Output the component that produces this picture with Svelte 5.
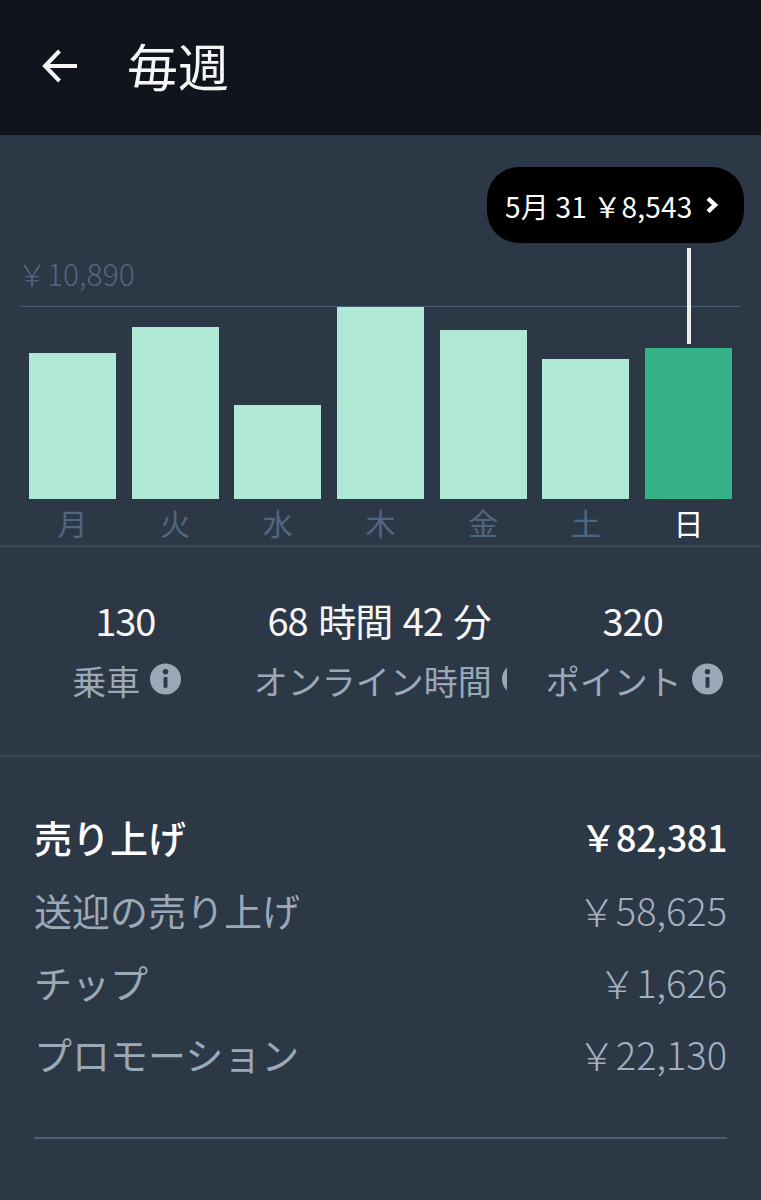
<script>
  const days = [
    { label: "月", height: 146 },
    { label: "火", height: 172 },
    { label: "水", height: 94 },
    { label: "木", height: 192 },
    { label: "金", height: 169 },
    { label: "土", height: 140 },
    { label: "日", height: 151, active: true }
  ];

  const stats = [
    { value: "130", label: "乗車" },
    { value: "68 時間 42 分", label: "オンライン時間" },
    { value: "320", label: "ポイント" }
  ];

  const rows = [
    { label: "送迎の売り上げ", amount: "￥58,625" },
    { label: "チップ", amount: "￥1,626" },
    { label: "プロモーション", amount: "￥22,130" }
  ];
</script>

<div class="page">
  <header class="top">
    <svg class="back" viewBox="0 0 36 34" width="36" height="34" aria-hidden="true">
      <path d="M35 17H3.5M17.5 2 3 17 17.5 32" fill="none" stroke="#f6f6f6" stroke-width="4" />
    </svg>
    <h1>毎週</h1>
  </header>

  <section class="chart">
    <div class="tooltip">
      <span>5月 31 ￥8,543</span>
      <svg viewBox="0 0 12 16" width="12" height="16" aria-hidden="true">
        <path d="M2 1.5 9 8 2 14.5" fill="none" stroke="#fff" stroke-width="4.4" />
      </svg>
    </div>
    <div class="marker"></div>

    <div class="max">￥10,890</div>
    <div class="plot">
      {#each days as day}
        <div class="bar-col">
          <div class="bar" class:active={day.active} style="height: {day.height}px"></div>
        </div>
      {/each}
    </div>
    <div class="axis">
      {#each days as day}
        <span class:active={day.active}>{day.label}</span>
      {/each}
    </div>
  </section>

  <section class="stats">
    {#each stats as stat}
      <div class="stat">
        <div class="value">{stat.value}</div>
        <div class="label">
          <span>{stat.label}</span>
          <svg class="info" viewBox="0 0 32 32" width="31" height="32" aria-hidden="true">
            <circle cx="16" cy="16" r="16" fill="#9aa8b7" />
            <circle cx="16" cy="8.5" r="2.8" fill="#2d3847" />
            <rect x="14" y="14" width="4" height="11" fill="#2d3847" />
          </svg>
        </div>
      </div>
    {/each}
  </section>

  <section class="earnings">
    <div class="row total">
      <span class="name">売り上げ</span>
      <span class="amount">￥82,381</span>
    </div>
    {#each rows as row}
      <div class="row">
        <span class="name">{row.label}</span>
        <span class="amount">{row.amount}</span>
      </div>
    {/each}
    <div class="rule"></div>
  </section>
</div>

<style>
  :global(body) {
    background: #2d3847;
  }
  .page {
    width: 761px;
    height: 1200px;
    overflow: hidden;
    background: #2d3847;
    font-family: "Noto Sans CJK JP", "Noto Sans", sans-serif;
    font-weight: 300;
    color: #f6f6f6;
  }
  .top {
    height: 135px;
    background: #10141c;
    display: flex;
    align-items: center;
    padding-left: 42px;
    box-sizing: border-box;
  }
  .back {
    margin-top: -3px;
  }
  h1 {
    margin: -6px 0 0 49px;
    font-size: 51px;
    line-height: 60px;
    font-weight: 400;
  }
  .chart {
    position: relative;
    height: 412px;
    box-sizing: border-box;
    padding-top: 120px;
    border-bottom: 2px solid #3a4759;
  }
  .tooltip {
    position: absolute;
    top: 32px;
    left: 487px;
    width: 257px;
    height: 76px;
    border-radius: 32px;
    background: #000;
    color: #fff;
    display: flex;
    align-items: center;
    gap: 13px;
    padding-left: 18px;
    box-sizing: border-box;
    font-size: 28px;
    letter-spacing: 0.2px;
    font-weight: 400;
  }
  .tooltip span {
    margin-top: 2px;
  }
  .marker {
    position: absolute;
    top: 113px;
    left: 687px;
    width: 4px;
    height: 96px;
    background: #ececec;
  }
  .max {
    margin-left: 17px;
    height: 51px;
    line-height: 36px;
    font-size: 30px;
    color: #4f6780;
  }
  .plot {
    margin: 0 21px;
    height: 192px;
    padding: 0 8px;
    border-top: 1px solid #4a6079;
    display: grid;
    grid-template-columns: repeat(7, 87px);
    justify-content: space-between;
    align-items: end;
  }
  .bar-col {
    display: flex;
    align-items: flex-end;
    height: 192px;
  }
  .bar {
    width: 100%;
    background: #b0e8d6;
  }
  .bar.active {
    background: #36b289;
  }
  .axis {
    margin: 0 29px;
    display: grid;
    grid-template-columns: repeat(7, 87px);
    justify-content: space-between;
    text-align: center;
    font-size: 30px;
    line-height: 47px;
    font-weight: 400;
    color: #4f6780;
  }
  .axis .active {
    color: #fff;
  }
  .stats {
    height: 210px;
    box-sizing: border-box;
    padding-top: 46px;
    display: grid;
    grid-template-columns: repeat(3, 1fr);
    border-bottom: 2px solid #3a4759;
  }
  .stat {
    min-width: 0;
    overflow: hidden;
    text-align: center;
  }
  .value {
    padding-right: 3px;
    font-size: 38px;
    line-height: 54px;
    font-weight: 400;
    letter-spacing: -1px;
    word-spacing: 3px;
  }
  .label {
    display: flex;
    justify-content: safe center;
    align-items: center;
    gap: 10px;
    margin-top: 6px;
    font-size: 34px;
    line-height: 56px;
    white-space: nowrap;
    font-weight: 400;
    color: #9aa8b7;
  }
  .info {
    flex: none;
    margin-top: -4px;
  }
  .earnings {
    padding: 42px 34px 0;
  }
  .row {
    display: flex;
    justify-content: space-between;
    align-items: center;
    height: 72px;
    color: #9aa8b7;
  }
  .name {
    font-size: 38px;
    font-weight: 400;
  }
  .amount {
    font-size: 38px;
    color: #a3b0be;
  }
  .row.total {
    height: 74px;
    color: #fff;
  }
  .row.total .name {
    font-weight: 500;
  }
  .row.total .amount {
    font-size: 36px;
    font-weight: 500;
    letter-spacing: -0.4px;
    color: #fff;
  }
  .rule {
    height: 2px;
    margin-top: 48px;
    background: #4a6079;
  }
</style>
